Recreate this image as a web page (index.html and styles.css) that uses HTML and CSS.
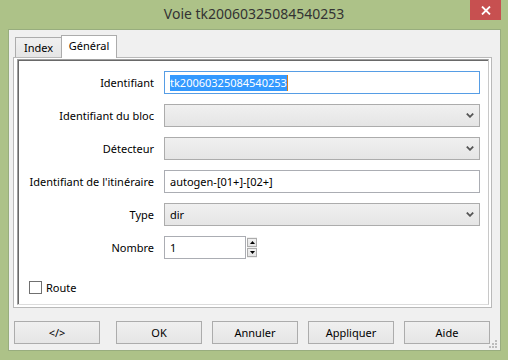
FILE: index.html
```html
<!DOCTYPE html>
<html lang="fr">
<head>
	<meta charset="UTF-8">
	<title>Voie tk20060325084540253</title>
	<link rel="stylesheet" href="styles.css">
</head>
<body>

	<div class="window">
		<div class="titlebar">
			<span></span>
			<span class="title">Voie tk20060325084540253</span>
			<div class="close">
				<svg width="10" height="9" viewBox="0 0 10 9"><path d="M1 0.5 L9 8.5 M9 0.5 L1 8.5" stroke="#fff" stroke-width="1.8" fill="none"/></svg>
			</div>
		</div>

		<div class="client">
			<!-- Onglets -->
			<div class="tabs">
				<div class="tab">Index</div>
				<div class="tab active">Général</div>
			</div>

			<div class="pane">
				<div class="frame">
					<div class="form">
						<label>Identifiant</label>
						<div class="input focus"><span class="sel">tk20060325084540253</span><span class="caret"></span></div>

						<label>Identifiant du bloc</label>
						<div class="combo"><span></span><svg class="chev" width="8" height="5" viewBox="0 0 8 5"><path d="M0.8 0.6 L4 3.8 L7.2 0.6" stroke="#555" stroke-width="1.8" fill="none"/></svg></div>

						<label>Détecteur</label>
						<div class="combo"><span></span><svg class="chev" width="8" height="5" viewBox="0 0 8 5"><path d="M0.8 0.6 L4 3.8 L7.2 0.6" stroke="#555" stroke-width="1.8" fill="none"/></svg></div>

						<label>Identifiant de l'itinéraire</label>
						<div class="input">autogen-[01+]-[02+]</div>

						<label>Type</label>
						<div class="combo"><span>dir</span><svg class="chev" width="8" height="5" viewBox="0 0 8 5"><path d="M0.8 0.6 L4 3.8 L7.2 0.6" stroke="#555" stroke-width="1.8" fill="none"/></svg></div>

						<label>Nombre</label>
						<div class="spin">
							<div class="input spin-input">1</div>
							<div class="spin-btns">
								<div class="spin-btn"><svg width="5" height="3" viewBox="0 0 5 3"><path d="M0 3 L2.5 0 L5 3 Z" fill="#000"/></svg></div>
								<div class="spin-btn"><svg width="5" height="3" viewBox="0 0 5 3"><path d="M0 0 L2.5 3 L5 0 Z" fill="#000"/></svg></div>
							</div>
						</div>
					</div>

					<div class="check">
						<span class="box"></span>
						<span>Route</span>
					</div>
				</div>
			</div>

			<!-- Boutons -->
			<div class="buttons">
				<div class="btn first">&lt;/&gt;</div>
				<div class="btn">OK</div>
				<div class="btn">Annuler</div>
				<div class="btn">Appliquer</div>
				<div class="btn">Aide</div>
			</div>

			<svg class="grip" width="9" height="9" viewBox="0 0 9 9">
				<rect x="6" y="0" width="2" height="2" fill="#bcbcbc"/>
				<rect x="3" y="3" width="2" height="2" fill="#bcbcbc"/>
				<rect x="6" y="3" width="2" height="2" fill="#bcbcbc"/>
				<rect x="0" y="6" width="2" height="2" fill="#bcbcbc"/>
				<rect x="3" y="6" width="2" height="2" fill="#bcbcbc"/>
				<rect x="6" y="6" width="2" height="2" fill="#bcbcbc"/>
			</svg>
		</div>
	</div>

</body>
</html>
```

FILE: styles.css
```css
body {
    margin: 0;
    padding: 0;
    font-family: "Noto Sans", "DejaVu Sans", sans-serif;
    font-size: 11px;
    color: #000;
}
.window {
    width: 508px;
    height: 360px;
    background-color: #adc288;
    display: flex;
    flex-direction: column;
    box-sizing: border-box;
}
.titlebar {
    height: 29px;
    display: grid;
    grid-template-columns: 1fr auto 1fr;
    align-items: start;
}
.title {
    font-size: 14px;
    line-height: 20px;
    padding-top: 4px;
    color: #333;
}
.close {
    justify-self: end;
    width: 31px;
    height: 20px;
    margin-right: 7px;
    background-color: #c75050;
    display: flex;
    align-items: center;
    justify-content: center;
}
.client {
    flex: 1;
    margin: 0 7px 9px 8px;
    background-color: #f0f0f0;
    border: 1px solid #98ad7e;
    position: relative;
}

/* Onglets */
.tabs {
    display: flex;
    align-items: flex-end;
    height: 22px;
    margin-top: 5px;
    padding-left: 6px;
}
.tab {
    width: 47px;
    height: 20px;
    box-sizing: border-box;
    border: 1px solid #acacac;
    border-bottom: none;
    background: linear-gradient(#f0f0f0, #e5e5e5);
    text-align: center;
    line-height: 20px;
    color: #000;
}
.tab.active {
    width: 56px;
    height: 23px;
    margin-left: -1px;
    margin-bottom: -1px;
    background: #fff;
    line-height: 20px;
    position: relative;
    z-index: 1;
}
.pane {
    width: 479px;
    height: 251px;
    margin-left: 4px;
    box-sizing: border-box;
    border: 1px solid #b9b9b9;
    background: #fff;
    padding: 1px 2px 2px 3px;
}
.frame {
    height: 100%;
    box-sizing: border-box;
    border: 1px solid #a0a0a0;
    border-right-color: #c8c8c8;
    border-bottom-color: #dcdcdc;
    box-shadow: inset 1px 1px 0 #696969;
    padding: 11px 8px 0 0;
}

/* Formulaire */
.form {
    display: grid;
    grid-template-columns: 136px 1fr;
    column-gap: 10px;
    row-gap: 10px;
    grid-auto-rows: 23px;
    align-items: center;
}
.form label {
    text-align: right;
    white-space: nowrap;
}
.input {
    height: 23px;
    box-sizing: border-box;
    border: 1px solid #abadb3;
    background: #fff;
    padding: 0 5px;
    line-height: 21px;
    display: flex;
    align-items: center;
}
.input.focus {
    border-color: #569de5;
}
.sel {
    background-color: #3399ff;
    color: #fff;
    line-height: 16px;
}
.caret {
    width: 1px;
    height: 16px;
    background-color: #d87c1c;
}
.combo {
    height: 23px;
    box-sizing: border-box;
    border: 1px solid #acacac;
    background: linear-gradient(#f0f0f0, #e5e5e5);
    padding: 0 5px 0 5px;
    display: flex;
    align-items: center;
    justify-content: space-between;
}
.spin {
    display: flex;
    align-items: center;
    gap: 1px;
}
.spin-input {
    width: 82px;
}
.spin-btns {
    display: flex;
    flex-direction: column;
    gap: 1px;
    background: #f0f0f0;
    padding: 1px 0;
}
.spin-btn {
    width: 10px;
    height: 9px;
    box-sizing: border-box;
    border: 1px solid #acacac;
    background: linear-gradient(#f0f0f0, #e5e5e5);
    display: flex;
    align-items: center;
    justify-content: center;
}
.check {
    display: flex;
    align-items: center;
    gap: 4px;
    margin: 22px 0 0 11px;
    height: 13px;
}
.check .box {
    width: 13px;
    height: 13px;
    box-sizing: border-box;
    border: 1px solid #707070;
    background: #fff;
}

/* Boutons */
.buttons {
    display: flex;
    gap: 10px;
    margin: 13px 0 0 5px;
}
.btn {
    width: 86px;
    height: 23px;
    box-sizing: border-box;
    border: 1px solid #acacac;
    background: linear-gradient(#f0f0f0, #e5e5e5);
    text-align: center;
    line-height: 21px;
}
.btn.first {
    margin-right: 6px;
}
.grip {
    position: absolute;
    right: 2px;
    bottom: 1px;
}
```
